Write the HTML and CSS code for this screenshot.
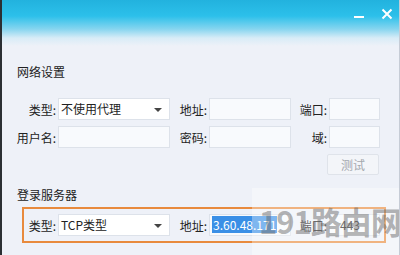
FILE: index.html
```html
<!DOCTYPE html>
<html lang="zh-CN">
<head>
  <meta charset="UTF-8">
  <title>网络设置</title>
  <link rel="stylesheet" href="styles.css">
</head>
<body>
<div class="window">
  <!-- Title bar -->
  <div class="titlebar">
    <span class="btn-min"></span>
    <svg class="btn-close" width="12" height="12" viewBox="0 0 12 12">
      <path d="M1.5 1.5 L10.5 10.5 M10.5 1.5 L1.5 10.5" stroke="#fff" stroke-width="2" fill="none"/>
    </svg>
  </div>

  <h2 class="heading">网络设置</h2>

  <div class="row">
    <span class="label l1">类型:</span>
    <div class="select">不使用代理<span class="arrow"></span></div>
    <span class="label l2">地址:</span>
    <div class="input w2"></div>
    <span class="label l3">端口:</span>
    <div class="input w3"></div>
  </div>
  <div class="row">
    <span class="label l1">用户名:</span>
    <div class="input w1"></div>
    <span class="label l2">密码:</span>
    <div class="input w2"></div>
    <span class="label l3">域:</span>
    <div class="input w3"></div>
  </div>
  <div class="button-row">
    <div class="button">测试</div>
  </div>

  <h2 class="heading heading-2">登录服务器</h2>

  <div class="server-box">
    <span class="label lb">类型:</span>
    <div class="select">TCP类型<span class="arrow"></span></div>
    <span class="label l2">地址:</span>
    <div class="input w2"><span class="selected">3.60.48.171</span></div>
    <span class="label l3">端口:</span>
    <div class="input w3 port">443</div>
  </div>

  <!-- Watermark -->
  <div class="watermark">191路由网</div>
</div>
</body>
</html>
```

FILE: styles.css
```css
body {
  margin: 0;
  font-family: "Noto Sans CJK SC", "Liberation Sans", sans-serif;
  font-size: 12px;
  color: #222;
}
.window {
  position: relative;
  width: 400px;
  height: 255px;
  box-sizing: border-box;
  border-left: 2px solid #2b2f33;
  border-right: 1px solid #c6ccd6;
  background: linear-gradient(#22b2de 0, #2cc0ea 16px, #86d5ef 29px, #d8ecf7 38px, #eef1f8 46px);
  overflow: hidden;
}
.titlebar {
  height: 64px;
}
.btn-min {
  position: absolute;
  left: 352px;
  top: 16px;
  width: 10px;
  height: 2px;
  background: #fff;
}
.btn-close {
  position: absolute;
  left: 379px;
  top: 8px;
}
.heading {
  margin: 0 0 0 15px;
  font-size: 12px;
  font-weight: normal;
  line-height: 16px;
  height: 34px;
}
.heading-2 {
  margin-top: 12px;
  height: 20px;
}
.row {
  display: flex;
  align-items: center;
  height: 22px;
  margin-bottom: 6px;
}
.label {
  box-sizing: border-box;
  text-align: right;
  padding-right: 2px;
  white-space: nowrap;
}
.l1 { width: 56px; }
.l2 { width: 39px; }
.l3 { width: 38px; }
.lb { width: 34px; }
.select, .input {
  box-sizing: border-box;
  height: 22px;
  border: 1px solid #dde2ea;
  background: #f8fafd;
  line-height: 20px;
  padding-left: 2px;
}
.select {
  position: relative;
  width: 112px;
  background: #fff;
}
.arrow {
  position: absolute;
  right: 7px;
  top: 9px;
  border-left: 4px solid transparent;
  border-right: 4px solid transparent;
  border-top: 4px solid #444;
}
.w1 { width: 112px; }
.w2 { width: 82px; }
.w3 { width: 51px; }
.button-row {
  display: flex;
  padding-left: 325px;
  margin-top: 2px;
}
.button {
  box-sizing: border-box;
  width: 52px;
  height: 21px;
  line-height: 19px;
  text-align: center;
  border: 1px solid #dfe3ea;
  border-radius: 2px;
  background: #f3f5f9;
  color: #a4a8ae;
}
.server-box {
  display: flex;
  align-items: center;
  box-sizing: border-box;
  margin-left: 20px;
  width: 364px;
  height: 36px;
  border: 2px solid #e88a3d;
}
.selected {
  background: #3a8fe6;
  color: #fff;
  padding: 0 1px;
}
.port {
  padding-left: 10px;
}
.watermark {
  position: absolute;
  left: 250px;
  top: 188px;
  width: 150px;
  height: 67px;
  box-sizing: border-box;
  padding: 14px 0 0 7px;
  background: rgba(255, 255, 255, 0.35);
  color: rgba(90, 90, 90, 0.45);
  font-size: 31px;
  line-height: 38px;
  font-weight: bold;
  letter-spacing: -1px;
  white-space: nowrap;
}
```
